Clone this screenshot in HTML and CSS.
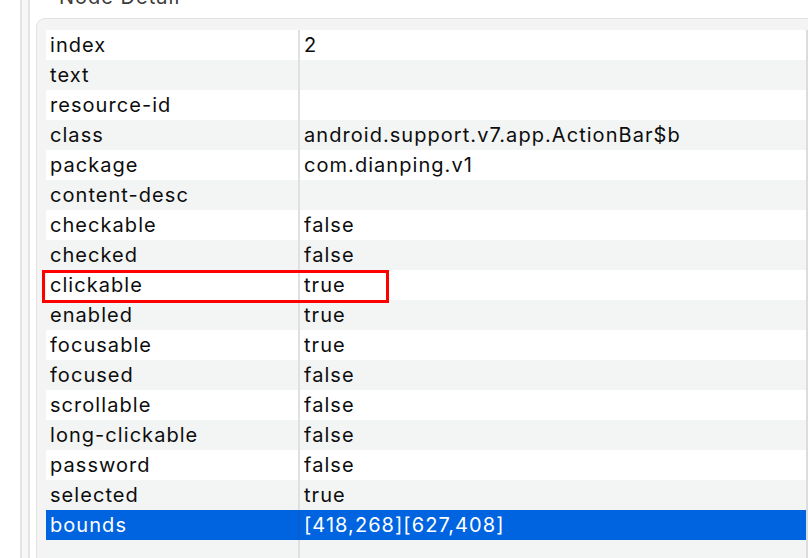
FILE: index.html
```html
<!DOCTYPE html>
<html>
<head>
<meta charset="utf-8">
<link rel="stylesheet" href="styles.css">
</head>
<body>
<div class="page">
  <div class="rail"></div>
  <div class="main">
    <div class="title">Node Detail</div>
    <div class="group">
      <div class="table">
        <div class="row"><div class="key">index</div><div class="val">2</div></div>
        <div class="row"><div class="key">text</div><div class="val"></div></div>
        <div class="row"><div class="key">resource-id</div><div class="val"></div></div>
        <div class="row"><div class="key">class</div><div class="val">android.support.v7.app.ActionBar$b</div></div>
        <div class="row"><div class="key">package</div><div class="val">com.dianping.v1</div></div>
        <div class="row"><div class="key">content-desc</div><div class="val"></div></div>
        <div class="row"><div class="key">checkable</div><div class="val">false</div></div>
        <div class="row"><div class="key">checked</div><div class="val">false</div></div>
        <div class="row marked"><div class="key">clickable</div><div class="val">true</div><div class="mark"></div></div>
        <div class="row"><div class="key">enabled</div><div class="val">true</div></div>
        <div class="row"><div class="key">focusable</div><div class="val">true</div></div>
        <div class="row"><div class="key">focused</div><div class="val">false</div></div>
        <div class="row"><div class="key">scrollable</div><div class="val">false</div></div>
        <div class="row"><div class="key">long-clickable</div><div class="val">false</div></div>
        <div class="row"><div class="key">password</div><div class="val">false</div></div>
        <div class="row"><div class="key">selected</div><div class="val">true</div></div>
        <div class="row selected"><div class="key">bounds</div><div class="val">[418,268][627,408]</div></div>
        <div class="row filler"><div class="key"></div><div class="val"></div></div>
      </div>
    </div>
  </div>
</div>
</body>
</html>
```
FILE: styles.css
```css
html, body {
  margin: 0;
  padding: 0;
  background: #ffffff;
  overflow: hidden;
  width: 808px;
  height: 558px;
}
.page {
  display: flex;
  height: 558px;
  font-family: "Inter", "Liberation Sans", sans-serif;
}
.rail {
  margin-left: 20px;
  width: 6px;
  flex: none;
  border-left: 2px solid #e4e4e4;
  border-right: 2px solid #e4e4e4;
  background: #f7f7f7;
}
.main {
  flex: 1;
  padding-left: 6px;
  min-width: 0;
}
.title {
  margin-top: -13px;
  height: 20px;
  line-height: 20px;
  font-size: 20px;
  letter-spacing: 1px;
  color: #3c3c3c;
  padding-left: 23px;
  margin-bottom: 11px;
}
.group {
  border: 1px solid #e2e2e2;
  border-right: none;
  border-bottom: none;
  border-top-left-radius: 9px;
  background: #f4f4f4;
  padding-top: 11px;
  padding-left: 9px;
  height: 600px;
}
.table {
  width: 760px;
  border-right: 2px solid #dcdcdc;
  background: #f3f4f4;
  height: 560px;
}
.row {
  display: flex;
  height: 30px;
  line-height: 30px;
  font-size: 20px;
  letter-spacing: 1.05px;
  color: #0d0d0d;
  background: #f3f4f4;
  position: relative;
}
.row:nth-child(odd) {
  background: #ffffff;
}
.row.filler {
  background: #f3f4f4;
  height: 40px;
}
.key {
  width: 248px;
  padding-left: 4px;
  border-right: 2px solid #e0e0e0;
  white-space: nowrap;
  flex: none;
}
.val {
  padding-left: 4px;
  white-space: nowrap;
}
.row.selected {
  background: #0064e1;
  color: #ffffff;
}
.row.selected .key {
  border-right-color: #0a5fcf;
}
.mark {
  position: absolute;
  z-index: 2;
  left: -4px;
  top: 0;
  width: 347px;
  height: 33px;
  box-sizing: border-box;
  border: 3px solid #ff0000;
}
```
